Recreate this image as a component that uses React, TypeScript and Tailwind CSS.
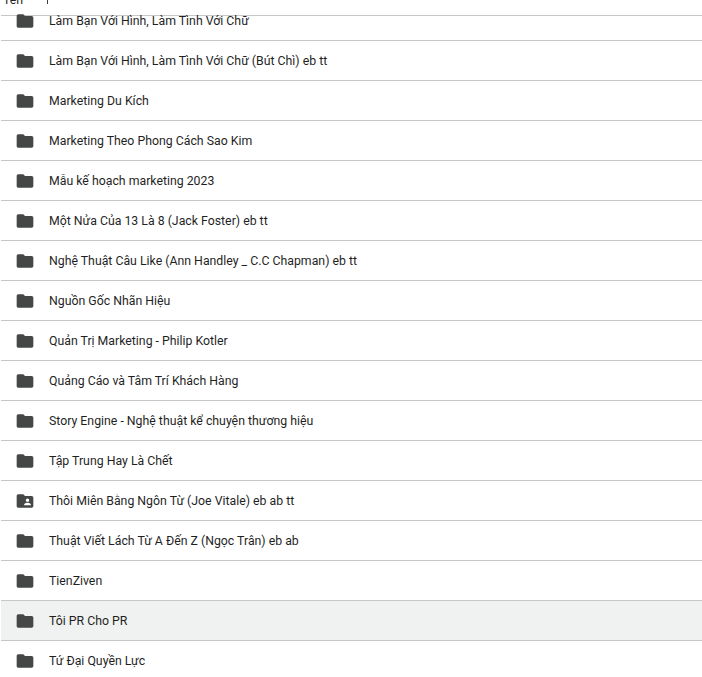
const folderPath =
  "M10 4H4c-1.1 0-1.99.9-1.99 2L2 18c0 1.1.9 2 2 2h16c1.1 0 2-.9 2-2V8c0-1.1-.9-2-2-2h-8l-2-2z";

const folderSharedPath =
  "M20 6h-8l-2-2H4c-1.1 0-2 .9-2 2v12c0 1.1.9 2 2 2h16c1.1 0 2-.9 2-2V8c0-1.1-.9-2-2-2zm-5 3c1.1 0 2 .9 2 2s-.9 2-2 2-2-.9-2-2 .9-2 2-2zm4 8h-8v-1c0-1.33 2.67-2 4-2s4 .67 4 2v1z";

const rows = [
  { name: "Làm Bạn Với Hình, Làm Tình Với Chữ" },
  { name: "Làm Bạn Với Hình, Làm Tình Với Chữ (Bút Chì) eb tt" },
  { name: "Marketing Du Kích" },
  { name: "Marketing Theo Phong Cách Sao Kim" },
  { name: "Mẫu kế hoạch marketing 2023" },
  { name: "Một Nửa Của 13 Là 8 (Jack Foster) eb tt" },
  { name: "Nghệ Thuật Câu Like (Ann Handley _ C.C Chapman) eb tt" },
  { name: "Nguồn Gốc Nhãn Hiệu" },
  { name: "Quản Trị Marketing - Philip Kotler" },
  { name: "Quảng Cáo và Tâm Trí Khách Hàng" },
  { name: "Story Engine - Nghệ thuật kể chuyện thương hiệu" },
  { name: "Tập Trung Hay Là Chết" },
  { name: "Thôi Miên Bằng Ngôn Từ (Joe Vitale) eb ab tt", shared: true },
  { name: "Thuật Viết Lách Từ A Đến Z (Ngọc Trân) eb ab" },
  { name: "TienZiven" },
  { name: "Tôi PR Cho PR", hover: true },
  { name: "Tứ Đại Quyền Lực" },
];

function FolderIcon({ shared }: { shared?: boolean }) {
  return (
    <svg viewBox="0 0 24 24" className="h-5 w-5 shrink-0 fill-[#444746]">
      <path d={shared ? folderSharedPath : folderPath} />
    </svg>
  );
}

function Row({ name, shared, hover, first }: { name: string; shared?: boolean; hover?: boolean; first?: boolean }) {
  return (
    <div
      className={`flex items-center gap-[14px] border-b border-[#c7c7c7] pl-[14px] shrink-0 ${
        first ? "h-[25px] items-end pb-[9px]" : "h-10"
      } ${hover ? "bg-[#f0f1f1]" : ""}`}
    >
      <FolderIcon shared={shared} />
      <span className="pt-px text-[12.3px] font-normal leading-5 text-[#1f1f1f]">{name}</span>
    </div>
  );
}

export default function App() {
  return (
    <div className="h-[677px] w-[702px] overflow-hidden bg-white pl-px font-['Roboto',sans-serif]">
      {/* Sticky column header, scrolled so only its bottom shows */}
      <div className="flex h-4 items-end gap-[24px] overflow-hidden border-b border-[#c7c7c7] pl-[2px]">
        <span className="mb-[5px] text-[12.3px] leading-5 text-[#1f1f1f]">Tên</span>
        <span className="mb-[11px] h-1 w-px bg-[#3c4043]" />
      </div>
      {rows.map((row, i) => (
        <Row key={row.name} {...row} first={i === 0} />
      ))}
    </div>
  );
}
